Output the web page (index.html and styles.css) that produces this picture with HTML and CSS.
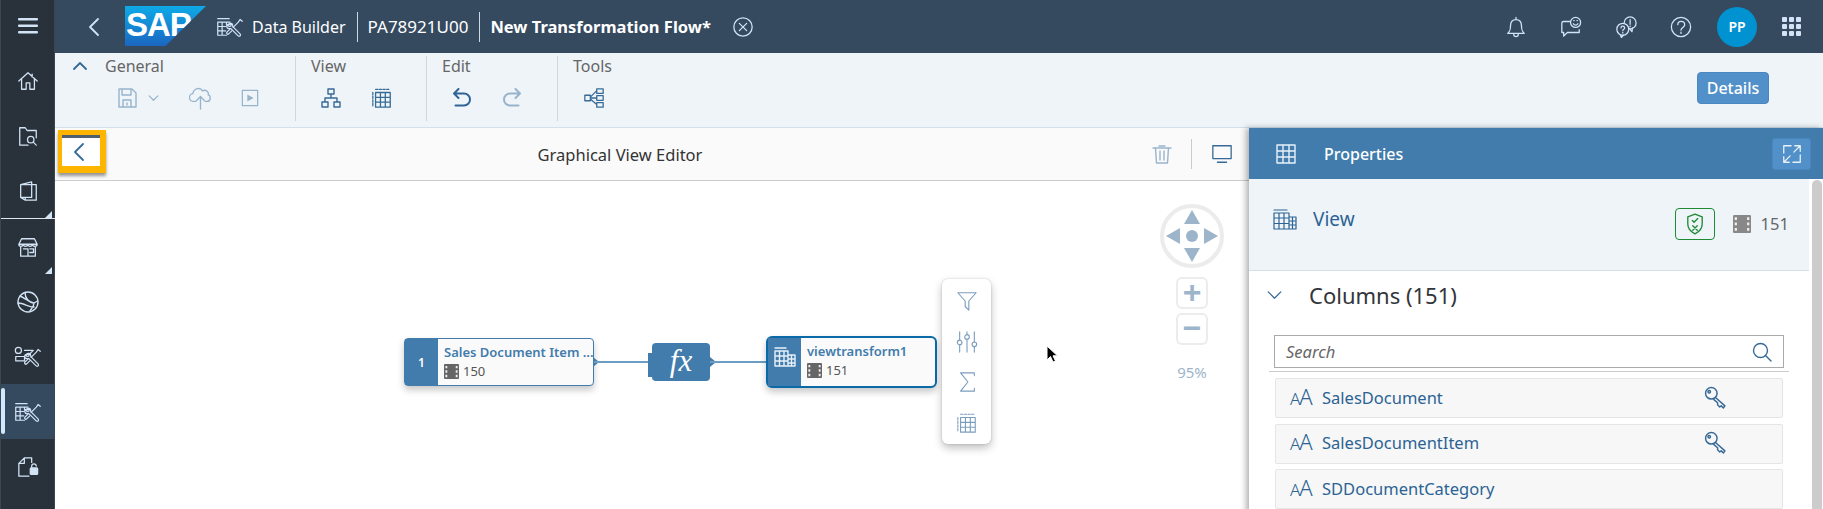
FILE: index.html
```html
<!DOCTYPE html>
<html lang="en">
<head>
<meta charset="utf-8">
<title>Data Builder - New Transformation Flow</title>
<link rel="stylesheet" href="styles.css">
</head>
<body>
<svg class="sprite" aria-hidden="true">
  <defs>
    <symbol id="i-table" viewBox="0 0 24 24"><path d="M3 3h18v18H3zM3 9h18M3 15h18M9 3v18M15 3v18"/></symbol>
    <symbol id="i-dtable" viewBox="0 0 24 24"><path d="M5 6h16v16H5zM5 11.300h16M5 16.600h16M10.300 6v16M15.600 6v16"/><path d="M5 2.500h16M2 6v16" stroke-dasharray="2.500 1.500"/></symbol>
    <symbol id="i-tools" viewBox="0 0 32 24"><path d="M2 7h14M2 7v15h10M2 12h9M2 17h9M7 7v15M12 7v3M2 3h13"/><path d="M14 9.500c2-2 5-1 5 1 0 1 0 1.500.5 2l8 8c1.500 2-1 3.500-2.500 2l-8-8c-.5-.5-1-.5-2 0-2.500 0-3.500-3-2-4.500l2 2 2-.5.5-2z"/><path d="M30 6l-2.500-2-2 3-6 6M18 17l-3.500 3.500c-1.500 1-3-.5-2-2l3.500-3.500"/></symbol>
    <symbol id="i-film" viewBox="0 0 16 16"><rect class="film-bg" width="16" height="16" rx="1"/><path class="film-holes" d="M1.500 2h2v2.500h-2zM1.500 6.700h2v2.500h-2zM1.500 11.500h2V14h-2zM12.500 2h2v2.500h-2zM12.500 6.700h2v2.500h-2zM12.500 11.500h2V14h-2z"/></symbol>
    <symbol id="i-key" viewBox="0 0 22 22"><circle cx="7" cy="7" r="5.500"/><circle cx="5" cy="5.500" r="1.200"/><path d="M11 11l9 8-1.500 2-2-2-1.500 1-2-2v-2l-3.500-3"/></symbol>
  </defs>
</svg>
<div class="app">
  <nav class="rail">
    <div class="rail-item rail-menu"><svg class="ic-menu" viewBox="0 0 20 16"><rect y="0" width="20" height="2.600" rx="1"/><rect y="6.500" width="20" height="2.600" rx="1"/><rect y="13" width="20" height="2.600" rx="1"/></svg></div>
    <div class="rail-item"><svg class="line ic-22" viewBox="0 0 24 24"><path d="M2 12L12 3l10 9M5 10v11h5v-7h4v7h5V10M16.500 4.500V7.500"/></svg></div>
    <div class="rail-item"><svg class="line ic-22" viewBox="0 0 24 24"><path d="M12 22H3V3h6l2 3h10v8M21 6v3"/><circle cx="15" cy="16" r="3.500"/><path d="M18 19l3 3"/></svg></div>
    <div class="rail-item rail-more"><svg class="line ic-22" viewBox="0 0 24 24"><path d="M4 5l12-3v3h5v17H9l-5-3zM4 5h12M16 5v14H4M9 19v3"/></svg></div>
    <div class="rail-sep"></div>
    <div class="rail-item rail-more"><svg class="line ic-22" viewBox="0 0 24 24"><path d="M5 3h14l3 6H2zM2 9c0 3 4 3 5 0 0 3 4 3 5 0 0 3 4 3 5 0 0 3 5 3 5 0M4 12v10h16V12M7 14h5v8H7M14 14h4v4h-4"/></svg></div>
    <div class="rail-item"><svg class="line ic-24" viewBox="0 0 24 24"><circle cx="12" cy="12" r="10"/><path d="M4 6c5 2 10 7 14 7l3.500-2M2 13c6 0 12 5 16 4M9 2.500C9 8 13 13 18 13c0 3-2 5-4 8"/></svg></div>
    <div class="rail-item"><svg class="line ic-model" viewBox="0 0 32 24"><circle cx="5" cy="5" r="3.500"/><path d="M2 12h10v5H2zM12 5h10l-4 4M14 9.500c2-2 5-1 5 1 0 1 0 1.500.5 2l8 8c1.500 2-1 3.500-2.500 2l-8-8c-.5-.5-1-.5-2 0-2.500 0-3.500-3-2-4.500l2 2 2-.5.5-2zM30 6l-2.500-2-2 3-6 6M18 17l-3.500 3.500c-1.500 1-3-.5-2-2l3.500-3.500"/></svg></div>
    <div class="rail-item rail-active"><svg class="line ic-model"><use href="#i-tools"/></svg></div>
    <div class="rail-item"><svg class="line ic-22" viewBox="0 0 24 24"><path d="M13 22H2V8l6-6h8v5M8 2v6H2"/><path d="M16 13v-2a2.500 2.500 0 0 1 5 0"/><rect class="solid" x="14.500" y="13" width="8" height="7" rx="1"/></svg></div>
  </nav>

  <div class="main">
    <header class="shell">
      <svg class="line shell-back" viewBox="0 0 12 20"><path d="M10 2L2 10l8 8"/></svg>
      <div class="logo"><span class="logo-text">SAP</span></div>
      <svg class="line shell-tool"><use href="#i-tools"/></svg>
      <span class="crumb">Data Builder</span>
      <span class="crumb crumb-id">PA78921U00</span>
      <span class="crumb crumb-title">New Transformation Flow*</span>
      <svg class="line shell-close" viewBox="0 0 24 24"><circle cx="12" cy="12" r="10"/><path d="M8 8l8 8M16 8l-8 8"/></svg>
      <div class="shell-actions">
        <svg class="line ic-22" viewBox="0 0 24 24"><path d="M3 19c2-2 3-3 3-8 0-4 2-7 6-7s6 3 6 7c0 5 1 6 3 8zM12 1.500V4M9.500 20a2.500 2.500 0 0 0 5 0"/></svg>
        <svg class="line ic-22" viewBox="0 0 24 24"><path d="M11 6H4a2 2 0 0 0-2 2v10h2v4l4-4h13v-3"/><circle cx="17" cy="7" r="5.500"/><path d="M14.500 8.500c1 2 4 2 5 0M15 5h.5M18.500 5h.5"/></svg>
        <svg class="line ic-22" viewBox="0 0 24 24"><circle cx="16.500" cy="7.500" r="6.500"/><path d="M19 13l-.5 4-3-3.500M16.500 4v5M16.500 11v.5"/><circle class="bubble-front" cx="8.500" cy="14.500" r="6.500"/><path d="M6 21l1 2.500 2-2.500M6.500 13c0-2.500 4-2.500 4 0 0 1.500-2 1.500-2 3M8.500 18v.5"/></svg>
        <svg class="line ic-22" viewBox="0 0 24 24"><circle cx="12" cy="12" r="10.500"/><path d="M8.500 9.500c0-5 7.500-5 7.500 0 0 3-4 3-4 6M12 17.500v1.500"/></svg>
        <div class="avatar">PP</div>
        <div class="apps"><i></i><i></i><i></i><i></i><i></i><i></i><i></i><i></i><i></i></div>
      </div>
    </header>

    <section class="toolbar">
      <div class="tgroup tgroup-general">
        <div class="tlabel"><svg class="line-dark tchev" viewBox="0 0 14 10"><path d="M1 8l6-6 6 6"/></svg><span>General</span></div>
        <div class="ticons">
          <svg class="line-mute ic-20" viewBox="0 0 20 20"><path d="M2 1h13l4 4v14H2zM5 1v6h9V1M6 19v-7h8v7M10 15v2"/></svg>
          <svg class="line-mute ic-chev" viewBox="0 0 12 8"><path d="M1 1l5 5 5-5"/></svg>
          <svg class="line-mute ic-cloud" viewBox="0 0 24 24"><path d="M7 15H5a4 4 0 0 1-1-8c1-6 8-7 10-3 4-2 7 2 6 4 3 1 3 7-1 7h-2M12 23V10M8 14l4-4 4 4"/></svg>
          <svg class="line-mute ic-play" viewBox="0 0 20 20"><path d="M1.500 1.500h17v17h-17z"/><path class="solid-mute" d="M7 6l7 4-7 4z"/></svg>
        </div>
      </div>
      <div class="tgroup tgroup-two">
        <div class="tlabel"><span>View</span></div>
        <div class="ticons">
          <svg class="line-dark ic-20" viewBox="0 0 20 20"><path d="M7 1h6v5H7zM1 14h6v5H1zM13 14h6v5h-6zM10 6v4M4 14v-4h12v4"/></svg>
          <svg class="line-dark ic-22"><use href="#i-dtable"/></svg>
        </div>
      </div>
      <div class="tgroup tgroup-two">
        <div class="tlabel"><span>Edit</span></div>
        <div class="ticons">
          <svg class="line-strong ic-20" viewBox="0 0 20 20"><path d="M6.500 1L2 5.500 6.500 10M2 5.500h10a6 6 0 0 1 0 12H3.500"/></svg>
          <svg class="line-mute line-thick ic-20" viewBox="0 0 20 20"><path d="M13.500 1L18 5.500 13.500 10M18 5.500H8a6 6 0 0 0 0 12h8.500"/></svg>
        </div>
      </div>
      <div class="tgroup tgroup-tools">
        <div class="tlabel"><span>Tools</span></div>
        <div class="ticons">
          <svg class="line-dark ic-22" viewBox="0 0 24 24"><path d="M2 9h6v6H2zM15 2h7v5h-7zM15 9.500h7v5h-7zM15 17h7v5h-7zM8 12h7M8 11l7-7M8 13l7 6"/></svg>
        </div>
      </div>
      <button class="details">Details</button>
    </section>

    <div class="workspace">
      <section class="editor">
        <div class="editor-head">
          <div class="backwrap"><svg class="line-dark" viewBox="0 0 12 20"><path d="M10 2L2 10l8 8"/></svg></div>
          <div class="editor-title">Graphical View Editor</div>
          <div class="editor-actions">
            <svg class="line-mute ic-20" viewBox="0 0 20 20"><path d="M1 4h18M7 2h6M3.500 4l1 15h11l1-15M8 7v9M12 7v9"/></svg>
            <span class="vsep"></span>
            <svg class="line-dark ic-22" viewBox="0 0 24 24"><path d="M2 3h20v14H2zM7 21h10M2 17h20"/></svg>
          </div>
        </div>
        <div class="canvas">
          <div class="node node-source">
            <div class="node-strip">1</div>
            <div class="node-body">
              <div class="node-title">Sales Document Item ...</div>
              <div class="node-meta"><svg class="film"><use href="#i-film"/></svg><span>150</span></div>
            </div>
            <i class="port"></i>
          </div>
          <div class="link link-a"></div>
          <div class="fx"><i class="fx-in"></i><span>fx</span><i class="port"></i></div>
          <div class="link link-b"></div>
          <div class="node node-view">
            <div class="node-strip"><svg class="line-white ic-22" viewBox="0 0 24 24"><path d="M2 6h13v15H2zM2 11h13M2 16h13M6.500 6v15M11 6v15M2 3h11M15 10h7v11h-7zM15 14h7M15 18h7M18.500 10v11"/></svg></div>
            <div class="node-body">
              <div class="node-title">viewtransform1</div>
              <div class="node-meta"><svg class="film"><use href="#i-film"/></svg><span>151</span></div>
            </div>
          </div>
          <div class="node-menu">
            <svg class="line-soft ic-22" viewBox="0 0 24 24"><path d="M2 3h20l-8 9v10l-4-4v-6z"/></svg>
            <svg class="line-soft ic-22" viewBox="0 0 24 24"><path d="M4 1v9M4 15v8M12 1v3M12 9v14M20 1v11M20 17v6"/><circle cx="4" cy="12.500" r="2.500"/><circle cx="12" cy="6.500" r="2.500"/><circle cx="20" cy="14.500" r="2.500"/></svg>
            <svg class="line-soft ic-22" viewBox="0 0 24 24"><path d="M20 5V2H5l8 10-8 10h15v-3"/></svg>
            <svg class="line-soft ic-22"><use href="#i-dtable"/></svg>
          </div>
          <svg class="nav-pad" viewBox="0 0 64 64">
            <circle class="nav-ring" cx="32" cy="32" r="30"/>
            <path class="nav-fill" d="M32 6l8 14H24zM32 58l-8-14h16zM6 32l14-8v16zM58 32l-14 8V24z"/>
            <circle class="nav-fill" cx="32" cy="32" r="6"/>
          </svg>
          <div class="zoom-btn zoom-in">+</div>
          <div class="zoom-btn zoom-out">&#8722;</div>
          <div class="zoom-level">95%</div>
          <svg class="pointer" viewBox="0 0 12 18"><path d="M1 1v14l3.500-3.500L7 17l2.500-1L7 10.800h4.500z"/></svg>
        </div>
      </section>

      <aside class="panel">
        <div class="panel-head">
          <svg class="line-white ic-24"><use href="#i-table"/></svg>
          <span class="panel-title">Properties</span>
          <button class="expand"><svg class="line-white ic-22" viewBox="0 0 24 24"><path d="M11 3H3v8M14 10l7-7M15 3h6v6M21 13v8h-8M3 15v6h6M3 21l7-7"/></svg></button>
        </div>
        <div class="panel-scroll">
          <div class="panel-content">
            <div class="entity">
              <svg class="line-deep ic-entity" viewBox="0 0 24 24"><path d="M1 6h15v16H1zM1 11h15M1 16.500h15M6 6v16M11 6v16M1 3h13M16 10h7v12h-7zM16 14h7M16 18h7M19.500 10v12"/></svg>
              <span class="entity-name">View</span>
              <div class="shield"><svg class="line-green" viewBox="0 0 20 24"><path d="M10 1l8 3v8c0 5-4 9-8 11-4-2-8-6-8-11V4zM7 8l2 2 4-4M7.500 14l5 5M12.500 14l-5 5"/></svg></div>
              <svg class="film film-big"><use href="#i-film"/></svg>
              <span class="entity-count">151</span>
            </div>
            <div class="columns">
              <div class="columns-head">
                <svg class="line-dark columns-chev" viewBox="0 0 16 10"><path d="M1 1l7 7 7-7"/></svg>
                <h2>Columns (151)</h2>
              </div>
              <div class="search">
                <span>Search</span>
                <svg class="line-dark ic-20" viewBox="0 0 20 20"><circle cx="8.500" cy="8.500" r="7"/><path d="M13.500 13.500l5.500 5.500"/></svg>
              </div>
              <div class="col-list">
                <div class="col-row"><span class="aa"><small>A</small>A</span><span class="col-name">SalesDocument</span><svg class="line-dark key"><use href="#i-key"/></svg></div>
                <div class="col-row"><span class="aa"><small>A</small>A</span><span class="col-name">SalesDocumentItem</span><svg class="line-dark key"><use href="#i-key"/></svg></div>
                <div class="col-row"><span class="aa"><small>A</small>A</span><span class="col-name">SDDocumentCategory</span></div>
              </div>
            </div>
          </div>
          <div class="scrollbar"><div class="thumb"></div></div>
        </div>
      </aside>
    </div>
  </div>
</div>
</body>
</html>
```

FILE: styles.css
```css
* { box-sizing: border-box; }
html, body { margin: 0; height: 509px; overflow: hidden; background: #fff; }
body { font-family: "Noto Sans", "Liberation Sans", sans-serif; color: #333; }
svg { display: block; flex: none; }
.sprite { position: absolute; width: 0; height: 0; }
svg.line, svg.line-dark, svg.line-mute, svg.line-strong, svg.line-soft, svg.line-white, svg.line-deep, svg.line-green {
  fill: none; stroke-width: 1.4; stroke-linejoin: round; stroke-linecap: round;
}
svg.line { stroke: #d1e3f5; }
svg.line-dark { stroke: #376a97; }
svg.line-mute { stroke: #98b4cc; }
svg.line-strong { stroke: #2f6497; stroke-width: 2; }
svg.line-mute.line-thick { stroke-width: 2; }
svg.line-soft { stroke: #7b9dbd; stroke-width: 1.200; }
svg.line-white { stroke: #e8f1fa; }
svg.line-deep { stroke: #2b6394; stroke-width: 1.200; }
svg.line-green { stroke: #1f8a34; stroke-width: 1.500; }
.bubble-front { fill: #354a5f; }
.ic-20 { width: 20px; height: 20px; }
.ic-22 { width: 22px; height: 22px; }
.ic-24 { width: 24px; height: 24px; }
.ic-model { width: 28px; height: 21px; }

.app { display: grid; grid-template-columns: 55px 1fr; height: 509px; }

/* side rail */
.rail { background: #29313a; border-left: 1px solid #3b4650; border-right: 1px solid #3b4650; display: flex; flex-direction: column; }
.rail-item { height: 55px; display: flex; align-items: center; justify-content: center; position: relative; flex: none; }
.rail-menu { height: 53px; align-items: flex-start; padding-top: 18px; }
.ic-menu { width: 20px; height: 16px; fill: #d1e3f5; }
.rail-sep { height: 1px; background: #dfe6ec; margin: 0 -1px 0 0; flex: none; }
.rail-more::after { content: ""; position: absolute; right: 2px; bottom: 0; border-style: solid; border-width: 0 0 7px 7px; border-color: transparent transparent #d1e3f5 transparent; }
.rail-active { background: #354a5f; }
.rail-active::before { content: ""; position: absolute; left: 0; top: 4px; bottom: 5px; width: 4px; border-radius: 2px; background: #d1e8ff; }
.solid { fill: #d1e3f5; }

/* main column */
.main { display: flex; flex-direction: column; min-width: 0; }
.shell { height: 53px; flex: none; background: #354a5f; display: flex; align-items: center; color: #fff; padding-left: 33px; }
.shell-back { width: 12px; height: 20px; stroke-width: 1.8 !important; margin-right: 25px; }
.logo { width: 81px; height: 40px; margin-right: 10px; margin-top: -1px; background: linear-gradient(#0eaae8, #1b66c0); clip-path: polygon(0 0, 100% 0, 50% 100%, 0 100%); position: relative; overflow: hidden; }
.logo-text { position: absolute; left: 1px; top: -3px; font: 700 33px/44px "Liberation Sans", sans-serif; letter-spacing: -1px; color: #fff; }
.shell-tool { width: 28px; height: 21px; margin-right: 8px; }
.crumb { font-size: 16px; line-height: 30px; padding-right: 11px; white-space: nowrap; }
.crumb-id { border-left: 1px solid #cfd8e0; padding-left: 10px; font-size: 17px; }
.crumb-title { border-left: 1px solid #cfd8e0; padding-left: 10px; font-weight: 700; padding-right: 0; font-size: 16.500px; }
.shell-close { width: 22px; height: 22px; margin-left: 21px; }
.shell-actions { margin-left: auto; display: flex; align-items: center; gap: 33px; padding-right: 22px; }
.avatar { width: 40px; height: 40px; border-radius: 50%; background: #0092d1; font-size: 14px; font-weight: 600; display: flex; align-items: center; justify-content: center; margin-left: -8px; }
.apps { display: grid; grid-template-columns: repeat(3, 5px); gap: 2px; margin-left: -8px; }
.apps i { width: 5px; height: 5px; border-radius: 1px; background: #d1e3f5; }

/* toolbar */
.toolbar { height: 75px; flex: none; background: #eff4f9; border-bottom: 1px solid #d3e0ec; display: flex; align-items: flex-start; padding-top: 3px; }
.tgroup { height: 65px; border-right: 1px solid #ccd7e1; flex: none; }
.tgroup-general { width: 241px; }
.tgroup-two { width: 131px; }
.tgroup-tools { border-right: 0; width: 100px; }
.tlabel { height: 20px; display: flex; align-items: center; padding-left: 15px; font-size: 16px; color: #666; }
.tgroup-general .tlabel { padding-left: 18px; }
.tchev { width: 14px; height: 10px; margin-right: 18px; stroke-width: 1.800 !important; }
.ticons { display: flex; align-items: center; height: 24px; margin-top: 10px; padding-left: 25px; gap: 30px; }
.tgroup-general .ticons { padding-left: 62px; gap: 0; }
.ic-chev { width: 11px; height: 7px; margin-left: 10.500px; }
.ic-cloud { width: 23px; height: 23px; margin-left: 30px; }
.ic-play { width: 18px; height: 18px; margin-left: 29.500px; }
.solid-mute { fill: #98b4cc; stroke: none; }
.details { margin: 16px 54px 0 auto; width: 72px; height: 32px; border: 1px solid #4a86c0; border-radius: 4px; background: #5290c9; color: #fff; font: 500 16px "Noto Sans", sans-serif; padding: 0; }

/* workspace */
.workspace { flex: 1; display: flex; min-height: 0; }
.editor { flex: 1; display: flex; flex-direction: column; min-width: 0; }
.editor-head { height: 53px; flex: none; background: #fafafa; border-bottom: 1px solid #ccc; display: flex; align-items: flex-start; }
.backwrap { width: 48px; height: 43px; margin: 2px 0 0 3px; border: solid #fdb500; border-width: 5px 6px 7px 4px; background: #fff; box-shadow: 0 3px 3px rgba(0,0,0,.4), inset 0 3px 0 #4f5f70; display: flex; align-items: center; justify-content: center; padding: 2px 4px 0 0; }
.backwrap svg { width: 12px; height: 22px; stroke-width: 1.800; }
.editor-title { flex: 1; text-align: center; font-size: 16.500px; line-height: 53px; color: #333; padding-right: 18px; }
.editor-actions { display: flex; align-items: center; height: 52px; gap: 19px; padding-right: 16px; }
.vsep { width: 1px; height: 30px; background: #ccc; }

/* canvas */
.canvas { flex: 1; position: relative; background: #fff; overflow: hidden; }
.node { position: absolute; display: flex; background: #fafafa; border: 1px solid #427cac; border-radius: 4px; box-shadow: 0 4px 7px rgba(0,0,0,.22); }
.node-source { left: 349px; top: 157px; width: 190px; height: 48px; }
.node-view { left: 711px; top: 155px; width: 171px; height: 52px; border: 2px solid #0a6aa8; border-radius: 6px; }
.node-strip { width: 33px; background: #427cac; color: #fff; font-size: 12px; font-weight: 600; display: flex; align-items: center; justify-content: center; flex: none; }
.node-view .node-strip { padding-bottom: 10px; }
.node-view .node-strip svg { width: 24px; height: 24px; }
.node-body { padding: 4px 0 0 6px; flex: 1; min-width: 0; }
.node-title { font-size: 13px; line-height: 18px; font-weight: 600; color: #427cac; white-space: nowrap; }
.node-meta { display: flex; align-items: center; gap: 4px; font-size: 13px; line-height: 18px; margin-top: 1px; color: #555; }
.film { width: 15px; height: 15px; }
.film-bg { fill: var(--film, #666); }
.film-holes { fill: #eee; }
.port { position: absolute; right: -6px; top: 50%; margin-top: -5px; border-style: solid; border-width: 5px 0 5px 6px; border-color: transparent transparent transparent #427cac; }
.link { position: absolute; height: 2px; top: 180px; background: #6b9cc3; }
.link-a { left: 539px; width: 58px; }
.link-b { left: 655px; width: 56px; }
.fx { position: absolute; left: 597px; top: 162px; width: 58px; height: 38px; background: #427cac; border-radius: 4px; color: #fff; font: italic 400 31px/36px "Liberation Serif", serif; text-align: center; }
.fx-in { position: absolute; left: -4px; top: 10px; width: 4px; height: 24px; background: #427cac; }
.node-menu { position: absolute; left: 887px; top: 98px; width: 49px; height: 165px; background: #fff; border-radius: 6px; box-shadow: 0 4px 8px rgba(0,0,0,.25), 0 0 2px rgba(0,0,0,.2); display: flex; flex-direction: column; align-items: center; gap: 18.500px; padding-top: 11px; }
.nav-pad { position: absolute; left: 1105px; top: 23px; width: 64px; height: 64px; }
.nav-ring { fill: #fff; stroke: #ececec; stroke-width: 4; }
.nav-fill { fill: #9db5ca; }
.zoom-btn { position: absolute; left: 1121px; width: 32px; height: 32px; border: 2px solid #ececec; border-radius: 6px; background: #fff; color: #9db5ca; font: 700 32px/27px "Liberation Sans", sans-serif; text-align: center; }
.zoom-in { top: 96px; }
.zoom-out { top: 132px; }
.zoom-level { position: absolute; left: 1112px; width: 50px; top: 181px; text-align: center; font-size: 15px; line-height: 20px; color: #9db5ca; }
.pointer { position: absolute; left: 991px; top: 164px; width: 12px; height: 18px; fill: #000; stroke: #fff; stroke-width: 1; }

/* properties panel */
.panel { width: 574px; flex: none; display: flex; flex-direction: column; box-shadow: -3px 0 6px rgba(0,0,0,.3); position: relative; background: #fff; }
.panel-head { height: 51px; flex: none; background: #427cac; color: #fff; display: flex; align-items: center; padding-left: 25px; }
.panel-title { font-size: 16px; margin-left: 26px; font-weight: 500; }
.expand { margin: 0 12px 0 auto; width: 39px; height: 32px; padding: 0; border: 1px solid #4a86c0; border-radius: 3px; background: #5290c9; display: flex; align-items: center; justify-content: center; }
.panel-scroll { flex: 1; display: flex; min-height: 0; }
.panel-content { flex: 1; min-width: 0; overflow: hidden; }
.scrollbar { width: 14px; flex: none; padding: 1px 1px 0 3px; background: #fff; }
.thumb { height: 100%; background: #ccc; border-radius: 5px 5px 0 0; }
.entity { height: 92px; background: #eff4f9; border-bottom: 1px solid #d3e0ec; display: flex; align-items: flex-start; padding: 28px 0 0 24px; }
.ic-entity { width: 24px; height: 24px; }
.entity-name { font-size: 19px; line-height: 24px; color: #2b6394; margin-left: 16px; }
.shield { width: 40px; height: 32px; margin: 1px 0 0 320px; border: 1px solid #1f8a34; border-radius: 4px; display: flex; align-items: center; justify-content: center; }
.shield svg { width: 18px; height: 22px; }
.film-big { --film: #888; width: 18px; height: 18px; margin: 8px 0 0 18px; }
.entity-count { font-size: 16.500px; line-height: 20px; margin: 7px 0 0 10px; color: #666; }
.columns { padding: 0 20px 0 18px; }
.columns-head { height: 48px; display: flex; align-items: center; }
.columns-chev { width: 15px; height: 9px; margin-right: 27px; }
.columns-head h2 { margin: 0; font-size: 22px; font-weight: 400; color: #32363a; }
.search { height: 33px; margin: 16px 0 0 7px; width: 510px; border: 1px solid #aaa; background: #fff; display: flex; align-items: center; justify-content: space-between; padding: 0 11px; font-style: italic; font-size: 16.500px; color: #666; }
.col-list { margin: 3px 0 0 2px; border-top: 1px solid #ccc; padding: 6px 0 0 6px; width: 520px; }
.col-row { height: 40px; width: 508px; margin-bottom: 5.500px; background: #f7f7f7; border: 1px solid #e5e5e5; border-radius: 2px; display: flex; align-items: center; padding: 0 0 2px 14px; color: #2b6394; }
.aa { width: 32px; font-size: 22px; line-height: 24px; flex: none; white-space: nowrap; letter-spacing: -1px; font-weight: 300; }
.aa small { font-size: 17px; }
.col-name { font-size: 16.500px; flex: 1; }
.key { width: 23px; height: 23px; margin-right: 55px; }
```
